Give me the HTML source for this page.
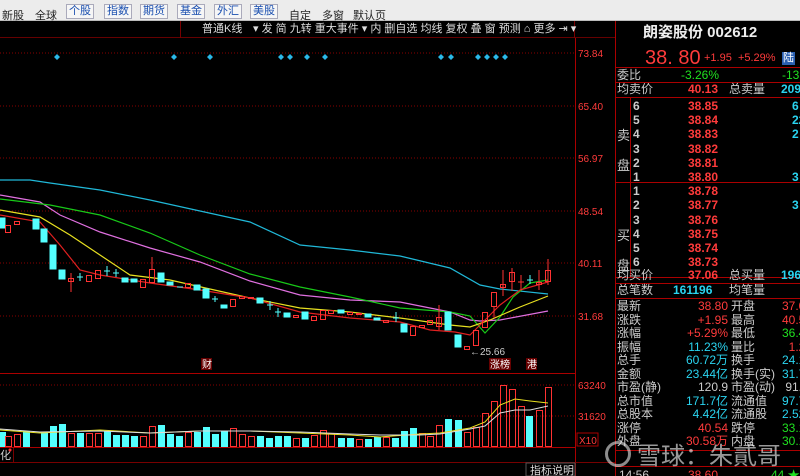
<!DOCTYPE html>
<html><head><meta charset="utf-8"><style>
*{margin:0;padding:0;box-sizing:border-box}
html,body{width:800px;height:476px;overflow:hidden}
body{background:#000;position:relative;font-family:"Liberation Sans","Noto Sans CJK SC",sans-serif;font-size:12px}
.top{position:absolute;left:0;top:0;width:800px;height:21px;background:#ececec;border-bottom:1px solid #bbb}
.tl{position:absolute;top:7px;font-size:11px;color:#222}
.btn{position:absolute;top:4px;height:15px;width:28px;border:1px solid #aab;background:#f6f6f6;color:#1a4fb0;font-size:11px;text-align:center;line-height:13px}
.bar2{position:absolute;left:0;top:21px;width:615px;height:17px;background:#000;border-bottom:1px solid #600}
.bi{position:absolute;top:2px;color:#ddd;font-size:11px;line-height:13px;white-space:nowrap}
.rp{position:absolute;left:615px;top:21px;width:185px;height:455px;border-left:1px solid #a00;overflow:hidden}
.r{position:absolute;font-size:12px;line-height:13px;white-space:nowrap}
.w{color:#ccc}.red{color:#ff3b3b}.cy{color:#2ad4f0}.gr{color:#20e020}
.hl{position:absolute;left:0;width:185px;height:1px;background:#a00}
</style></head><body>
<div class="top">
<span class="tl" style="left:2px">新股</span><span class="tl" style="left:35px">全球</span>
<div class="btn" style="left:66px">个股</div><div class="btn" style="left:104px">指数</div><div class="btn" style="left:140px">期货</div><div class="btn" style="left:177px">基金</div><div class="btn" style="left:214px">外汇</div><div class="btn" style="left:250px">美股</div>
<span class="tl" style="left:289px">自定</span><span class="tl" style="left:322px">多窗</span><span class="tl" style="left:353px">默认页</span>
</div>
<div class="bar2">
<div style="position:absolute;left:180px;top:0;width:395px;height:17px;border-left:1px solid #700;border-right:1px solid #700"></div>
<span class="bi" style="left:202px">普通K线</span><span class="bi" style="left:253px">▾ 发 简 九转 重大事件 ▾ 内 删自选 均线 复权 叠 窗 预测 ⌂ 更多 ⇥ ▾</span>
</div>
<svg style="position:absolute;left:0;top:38px" width="615" height="438" viewBox="0 38 615 438">
<g stroke="#800" stroke-dasharray="1,2" stroke-width="1">
<line x1="0" y1="53" x2="575" y2="53"/><line x1="0" y1="106" x2="575" y2="106"/><line x1="0" y1="158" x2="575" y2="158"/><line x1="0" y1="211" x2="575" y2="211"/><line x1="0" y1="263" x2="575" y2="263"/><line x1="0" y1="316" x2="575" y2="316"/><line x1="0" y1="385" x2="575" y2="385"/><line x1="0" y1="416" x2="575" y2="416"/>
</g>
<line x1="575.5" y1="38" x2="575.5" y2="476" stroke="#a00"/>
<line x1="0" y1="373.5" x2="575" y2="373.5" stroke="#a00"/>
<line x1="0" y1="447.5" x2="575" y2="447.5" stroke="#a00"/>
<line x1="0" y1="462.5" x2="615" y2="462.5" stroke="#700"/>
<g font-size="10" fill="#ff3b3b" font-family="Liberation Sans">
<text x="578" y="57">73.84</text><text x="578" y="110">65.40</text><text x="578" y="162">56.97</text><text x="578" y="215">48.54</text><text x="578" y="267">40.11</text><text x="578" y="320">31.68</text><text x="578" y="389">63240</text><text x="578" y="420">31620</text><text x="579" y="444">X10</text>
</g>
<rect x="577" y="433" width="21" height="13" fill="none" stroke="#a00"/>
<g fill="#2ab8e8">
<path d="M54 57l3-3 3 3-3 3z M171 57l3-3 3 3-3 3z M207 57l3-3 3 3-3 3z M278 57l3-3 3 3-3 3z M287 57l3-3 3 3-3 3z M304 57l3-3 3 3-3 3z M322 57l3-3 3 3-3 3z M438 57l3-3 3 3-3 3z M448 57l3-3 3 3-3 3z M475 57l3-3 3 3-3 3z M484 57l3-3 3 3-3 3z M493 57l3-3 3 3-3 3z M502 57l3-3 3 3-3 3z"/>
</g>
<g fill="none" stroke-width="1.2">
<polyline stroke="#20b8d8" points="0,180 30,180 50,183 100,190 150,200 200,211 250,222 300,245 350,250 400,256 450,268 480,285 500,289 548,294"/>
<polyline stroke="#e070e0" points="0,195 40,202 60,215 100,232 150,248 200,262 250,281 300,295 350,300 400,302 450,312 470,320 480,321 500,320 548,311"/>
<polyline stroke="#18c818" points="0,199 50,205 100,215 150,233 200,255 250,274 300,287 350,297 400,308 450,312 470,316 485,333 500,317 513,297 530,283 548,280"/>
<polyline stroke="#e8e020" points="0,210 40,217 70,235 100,255 130,275 170,280 250,298 300,308 350,312 400,318 450,325 470,327 490,320 520,307 548,296"/>
<polyline stroke="#e02020" points="0,215 40,222 60,245 80,270 100,275 150,283 200,290 250,298 300,312 350,318 400,322 430,330 455,332 470,335 485,320 500,305 520,290 548,282"/>
</g>
<g stroke-width="1">
<g fill="#54ffff" stroke="#54ffff">
<rect x="0" y="218" width="5" height="10"/><rect x="33" y="219" width="6" height="10"/><rect x="41" y="229" width="6" height="13"/><rect x="50" y="245" width="6" height="24"/><rect x="59" y="270" width="6" height="9"/><rect x="122" y="278" width="6" height="4"/><rect x="131" y="279" width="6" height="3"/><rect x="158" y="273" width="6" height="9"/><rect x="167" y="282" width="6" height="3"/><rect x="194" y="285" width="6" height="5"/><rect x="203" y="289" width="6" height="9"/><rect x="221" y="305" width="6" height="3"/><rect x="257" y="298" width="6" height="5"/><rect x="284" y="313" width="6" height="4"/><rect x="302" y="312" width="6" height="7"/><rect x="338" y="310" width="6" height="3"/><rect x="365" y="314" width="6" height="3"/><rect x="374" y="318" width="6" height="2"/><rect x="401" y="324" width="6" height="8"/><rect x="445" y="312" width="6" height="18"/><rect x="455" y="335" width="6" height="12"/>
<path d="M77 277h6M80 273v8M104 271h6M107 266v10M113 273h6M116 269v8M177 287h6M212 299h6M215 296v6M267 305h6M270 301v9M275 312h6M278 308v9M393 318h6M396 312v10M527 280h6M530 275v9" fill="none"/>
</g>
<g fill="none" stroke="#ff3232">
<rect x="5.5" y="225.5" width="5" height="7"/><rect x="14.5" y="221.5" width="5" height="3"/><rect x="68.5" y="278.5" width="5" height="3"/><line x1="71" y1="273" x2="71" y2="292"/><rect x="86.5" y="275.5" width="5" height="6"/><rect x="95.5" y="270.5" width="5" height="8"/><rect x="140.5" y="279.5" width="5" height="8"/><rect x="149.5" y="269.5" width="5" height="13"/><line x1="152" y1="257" x2="152" y2="269"/><rect x="185.5" y="283.5" width="5" height="4"/><rect x="230.5" y="299.5" width="5" height="7"/><rect x="239.5" y="296.5" width="5" height="2"/><rect x="248.5" y="297.5" width="5" height="1"/><rect x="293.5" y="315.5" width="5" height="2"/><rect x="311.5" y="316.5" width="5" height="4"/><rect x="320.5" y="310.5" width="5" height="9"/><rect x="328.5" y="310.5" width="5" height="3"/><rect x="347.5" y="312.5" width="5" height="2"/><rect x="356.5" y="313.5" width="5" height="1"/><rect x="383.5" y="320.5" width="5" height="2"/><rect x="410.5" y="326.5" width="5" height="9"/><rect x="419.5" y="325.5" width="5" height="2"/><rect x="427.5" y="320.5" width="5" height="4"/><rect x="436.5" y="317.5" width="5" height="9"/><line x1="439" y1="305" x2="439" y2="330"/><rect x="464.5" y="346.5" width="5" height="3"/><rect x="473.5" y="330.5" width="5" height="15"/><rect x="482.5" y="312.5" width="5" height="15"/><rect x="491.5" y="292.5" width="5" height="14"/><line x1="494" y1="306" x2="494" y2="318"/><rect x="500.5" y="284.5" width="5" height="3"/><line x1="503" y1="270" x2="503" y2="296"/><rect x="509.5" y="272.5" width="5" height="9"/><line x1="512" y1="268" x2="512" y2="291"/><line x1="518" y1="282" x2="524" y2="282"/><line x1="521" y1="275" x2="521" y2="290"/><rect x="536.5" y="282.5" width="5" height="2"/><line x1="539" y1="270" x2="539" y2="290"/><rect x="545.5" y="270.5" width="5" height="11"/><line x1="548" y1="259" x2="548" y2="285"/>
</g>
</g>
<text x="470" y="355" font-size="10" fill="#ccc">←25.66</text>
<g font-size="10" fill="#fff"><rect x="201" y="358" width="11" height="12" fill="#600"/><text x="202" y="368">财</text><rect x="489" y="358" width="22" height="12" fill="#600"/><text x="490" y="368">涨榜</text><rect x="526" y="358" width="11" height="12" fill="#600"/><text x="527" y="368">港</text></g>
<g fill="#54ffff">
<rect x="0" y="432" width="6" height="15"/><rect x="23" y="431" width="7" height="16"/><rect x="41" y="432" width="7" height="15"/><rect x="50" y="426" width="7" height="21"/><rect x="59" y="424" width="7" height="23"/><rect x="77" y="433" width="7" height="14"/><rect x="104" y="431" width="7" height="16"/><rect x="113" y="435" width="7" height="12"/><rect x="122" y="435" width="7" height="12"/><rect x="131" y="436" width="7" height="11"/><rect x="158" y="425" width="7" height="22"/><rect x="167" y="434" width="7" height="13"/><rect x="176" y="436" width="7" height="11"/><rect x="194" y="432" width="7" height="15"/><rect x="203" y="427" width="7" height="20"/><rect x="212" y="434" width="7" height="13"/><rect x="221" y="431" width="7" height="16"/><rect x="257" y="436" width="7" height="11"/><rect x="266" y="438" width="7" height="9"/><rect x="275" y="436" width="7" height="11"/><rect x="284" y="436" width="7" height="11"/><rect x="302" y="438" width="7" height="9"/><rect x="338" y="438" width="7" height="9"/><rect x="347" y="438" width="7" height="9"/><rect x="365" y="439" width="7" height="8"/><rect x="374" y="437" width="7" height="10"/><rect x="401" y="431" width="7" height="16"/><rect x="410" y="428" width="7" height="19"/><rect x="445" y="419" width="7" height="28"/><rect x="455" y="420" width="7" height="27"/><rect x="526" y="416" width="7" height="31"/><rect x="392" y="438" width="7" height="9"/>
</g>
<g fill="none" stroke="#ff3232">
<rect x="5.5" y="436.5" width="6" height="10"/><rect x="14.5" y="434.5" width="6" height="12"/><rect x="68.5" y="433.5" width="6" height="13"/><rect x="86.5" y="433.5" width="6" height="13"/><rect x="95.5" y="433.5" width="6" height="13"/><rect x="140.5" y="436.5" width="6" height="10"/><rect x="149.5" y="426.5" width="6" height="20"/><rect x="185.5" y="432.5" width="6" height="14"/><rect x="230.5" y="428.5" width="6" height="18"/><rect x="239.5" y="434.5" width="6" height="12"/><rect x="248.5" y="436.5" width="6" height="10"/><rect x="293.5" y="438.5" width="6" height="8"/><rect x="311.5" y="435.5" width="6" height="11"/><rect x="320.5" y="430.5" width="6" height="16"/><rect x="328.5" y="433.5" width="6" height="13"/><rect x="356.5" y="439.5" width="6" height="7"/><rect x="383.5" y="437.5" width="6" height="9"/><rect x="419.5" y="433.5" width="6" height="13"/><rect x="427.5" y="436.5" width="6" height="10"/><rect x="436.5" y="425.5" width="6" height="21"/><rect x="464.5" y="432.5" width="6" height="14"/><rect x="473.5" y="427.5" width="6" height="19"/><rect x="482.5" y="413.5" width="6" height="33"/><rect x="491.5" y="401.5" width="6" height="45"/><rect x="500.5" y="385.5" width="6" height="61"/><rect x="509.5" y="389.5" width="6" height="57"/><rect x="518.5" y="406.5" width="6" height="40"/><rect x="536.5" y="410.5" width="6" height="36"/><rect x="545.5" y="387.5" width="6" height="59"/>
</g>
<polyline fill="none" stroke="#e8e020" points="0,430 40,433 100,430 150,433 200,431 250,431 300,433 350,435 380,437 420,434 440,433 470,428 485,422 500,405 515,399 530,401 548,403"/>
<polyline fill="none" stroke="#ddd" points="0,429 40,432 100,431 150,433 200,431 250,431 300,432 350,434 380,435 420,435 440,434 470,429 485,426 500,413 515,410 530,410 548,406"/>
<text x="0" y="459" font-size="11" fill="#ccc">化</text><circle cx="10" cy="450" r="1.5" fill="#f33"/>
<line x1="13.5" y1="448" x2="13.5" y2="462" stroke="#700"/>
<rect x="526" y="463" width="49" height="13" fill="#000" stroke="#555"/>
<text x="530" y="474" font-size="11" fill="#ddd">指标说明</text>
</svg>
<div class="rp">
<div class="r" style="left:27px;top:3px;font-size:15px;font-weight:bold;color:#eee;line-height:18px">朗姿股份 002612</div>
<div class="r red" style="left:29px;top:26px;font-size:20px;line-height:22px">38. 80</div>
<div class="r red" style="left:88px;top:31px;font-size:11px">+1.95 &nbsp;+5.29%</div>
<div class="r" style="left:166px;top:31px;font-size:11px;background:#2a5fb0;color:#fff;padding:0 1px">陆</div>
<div class="hl" style="top:46px"></div>
<div class="r w" style="left:1px;top:48px">委比</div><div class="r gr" style="left:65px;top:48px">-3.26%</div><div class="r gr" style="left:166px;top:48px">-13</div>
<div class="hl" style="top:61px"></div>
<div class="r w" style="left:1px;top:62px">均卖价</div><div class="r red" style="left:72px;top:62px;font-weight:bold">40.13</div><div class="r w" style="left:113px;top:62px">总卖量</div><div class="r cy" style="left:165px;top:62px;font-weight:bold">2098</div>
<div class="hl" style="top:76px"></div>
<div style="position:absolute;left:14px;top:76px;width:1px;height:180px;background:#a00"></div>
<div class="hl" style="top:161px"></div>
<div class="r w" style="left:1px;top:100px;font-size:13px;line-height:30px">卖<br>盘</div>
<div class="r w" style="left:1px;top:200px;font-size:13px;line-height:30px">买<br>盘</div>
<div class="r w" style="left:17px;top:78px;line-height:14.2px;font-weight:bold">6<br>5<br>4<br>3<br>2<br>1<br>1<br>2<br>3<br>4<br>5<br>6</div>
<div class="r red" style="left:72px;top:78px;line-height:14.2px;font-weight:bold">38.85<br>38.84<br>38.83<br>38.82<br>38.81<br>38.80<br>38.78<br>38.77<br>38.76<br>38.75<br>38.74<br>38.73</div>
<div class="r cy" style="left:176px;top:78px;line-height:14.2px;font-weight:bold">6<br>225<br>2<br><br><br>3<br><br>3</div>
<div class="hl" style="top:256px"></div>
<div class="r w" style="left:1px;top:248px">均买价</div><div class="r red" style="left:72px;top:248px;font-weight:bold">37.06</div><div class="r w" style="left:113px;top:248px">总买量</div><div class="r cy" style="left:165px;top:248px;font-weight:bold">1960</div>
<div class="hl" style="top:262px"></div>
<div class="r w" style="left:1px;top:263px">总笔数</div><div class="r cy" style="left:57px;top:263px;font-weight:bold">161196</div><div class="r w" style="left:113px;top:263px">均笔量</div>
<div class="hl" style="top:277px"></div>
<div class="r w" style="left:1px;top:279px;line-height:13.5px">最新<br>涨跌<br>涨幅<br>振幅<br>总手<br>金额<br>市盈(静)<br>总市值<br>总股本<br>涨停<br>外盘</div>
<div class="r" style="left:52px;top:279px;line-height:13.5px;text-align:right;width:60px"><span class="red">38.80</span><br><span class="red">+1.95</span><br><span class="red">+5.29%</span><br><span class="cy">11.23%</span><br><span class="cy">60.72万</span><br><span class="cy">23.44亿</span><br><span class="w">120.9</span><br><span class="cy">171.7亿</span><br><span class="cy">4.42亿</span><br><span class="red">40.54</span><br><span class="red">30.58万</span></div>
<div class="r w" style="left:115px;top:279px;line-height:13.5px">开盘<br>最高<br>最低<br>量比<br>换手<br>换手(实)<br>市盈(动)<br>流通值<br>流通股<br>跌停<br>内盘</div>
<div class="r" style="left:166px;top:279px;line-height:13.5px"><span class="red">37.0</span><br><span class="red">40.5</span><br><span class="gr">36.4</span><br><span class="red">&nbsp;&nbsp;1.2</span><br><span class="cy">24.10</span><br><span class="cy">31.70</span><br><span class="w">&nbsp;91.9</span><br><span class="cy">97.75</span><br><span class="cy">2.52</span><br><span class="gr">33.1</span><br><span class="gr">30.14</span></div>
<div class="hl" style="top:429px"></div>
<div class="hl" style="top:445px"></div>
<div class="r w" style="left:3px;top:448px">14:56</div><div class="r red" style="left:72px;top:448px">38.60</div><div class="r gr" style="left:155px;top:448px">44 ★</div>
</div>
<div style="position:absolute;left:605px;top:441px;width:26px;height:26px;border:3px solid rgba(255,255,255,.55);border-radius:50%"></div>
<div style="position:absolute;left:637px;top:439px;font-size:24px;line-height:30px;color:rgba(255,255,255,.6);font-family:'Noto Sans CJK SC',sans-serif;white-space:nowrap">雪球：朱貳哥</div>
</body></html>
